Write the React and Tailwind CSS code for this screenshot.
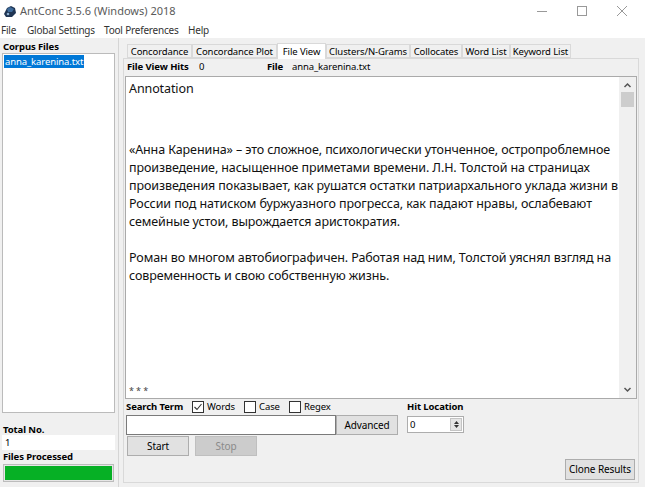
import React from 'react';

const ui = { fontFamily: '"Noto Sans", "Open Sans", sans-serif' };

const tabs = [
  { name: 'Concordance', w: 'w-[65px]' },
  { name: 'Concordance Plot', w: 'w-[85px]' },
  { name: 'File View', w: 'w-[49px]', active: true },
  { name: 'Clusters/N-Grams', w: 'w-[84px]' },
  { name: 'Collocates', w: 'w-[52px]' },
  { name: 'Word List', w: 'w-[48px]' },
  { name: 'Keyword List', w: 'w-[61px]' },
];

const para1 = [
  '«Анна Каренина» – это сложное, психологически утонченное, остропроблемное',
  'произведение, насыщенное приметами времени. Л.Н. Толстой на страницах',
  'произведения показывает, как рушатся остатки патриархального уклада жизни в',
  'России под натиском буржуазного прогресса, как падают нравы, ослабевают',
  'семейные устои, вырождается аристократия.',
];

const para2 = [
  'Роман во многом автобиографичен. Работая над ним, Толстой уяснял взгляд на',
  'современность и свою собственную жизнь.',
];

const Checkbox = ({ checked, label }) => (
  <label className="flex items-center gap-[3px]">
    <span className="w-[12px] h-[12px] border border-[#333] bg-white flex items-center justify-center">
      {checked && (
        <svg width="10" height="10" viewBox="0 0 10 10">
          <path d="M1.5 5 L4 7.5 L8.5 2" fill="none" stroke="#333" strokeWidth="1.1" />
        </svg>
      )}
    </span>
    <span>{label}</span>
  </label>
);

const AppIcon = () => (
  <svg width="14" height="13" viewBox="0 0 14 13">
    <path d="M1 9 L4 3 L8 1 L12 3 L13 8 L9 12 L3 12 Z" fill="#1f3553" />
    <path d="M4 4 L7 2 L11 4 L9 7 L5 7 Z" fill="#3d6a9a" />
    <circle cx="5" cy="9" r="1.3" fill="#8fb0d0" />
  </svg>
);

const Button = ({ children, className = '' }) => (
  <div className={`h-[20px] border border-[#adadad] bg-[#e1e1e1] flex items-center justify-center ${className}`}>{children}</div>
);

export default function App() {
  return (
    <div className="w-[645px] h-[487px] bg-[#f0f0f0] flex flex-col overflow-hidden text-[9.5px] tracking-[-0.1px] text-black whitespace-nowrap" style={ui}>
      {/* title bar */}
      <div className="h-[22px] bg-white flex items-center shrink-0">
        <div className="pl-[3px] pr-[3px] flex items-center"><AppIcon /></div>
        <span className="text-[11px] tracking-normal text-[#5a5a5a]">AntConc 3.5.6 (Windows) 2018</span>
        <div className="ml-auto flex items-center h-full pr-[3px]">
          <div className="w-[40px] flex justify-center">
            <svg width="10" height="10" viewBox="0 0 10 10"><path d="M0 5.5 H10" stroke="#999" strokeWidth="1" /></svg>
          </div>
          <div className="w-[40px] flex justify-center">
            <svg width="10" height="10" viewBox="0 0 10 10"><rect x="0.5" y="0.5" width="9" height="9" fill="none" stroke="#999" /></svg>
          </div>
          <div className="w-[40px] flex justify-center">
            <svg width="10" height="10" viewBox="0 0 10 10"><path d="M0 0 L10 10 M10 0 L0 10" stroke="#999" strokeWidth="1" /></svg>
          </div>
        </div>
      </div>

      {/* menu bar */}
      <div className="h-[16px] bg-white flex items-center pl-[1px] shrink-0 text-[#333] text-[10px] tracking-[-0.2px]">
        <span className="w-[26px]">File</span>
        <span className="w-[77px]">Global Settings</span>
        <span className="w-[84px]">Tool Preferences</span>
        <span>Help</span>
      </div>

      {/* body */}
      <div className="flex-1 flex min-h-0">
        {/* left panel */}
        <div className="w-[119px] flex flex-col pl-[2px] pr-[3px] pb-[5px] border-r border-[#d5d5d5]">
          <div className="h-[15px] font-bold leading-[15px] pl-[1px] pt-[1px]">Corpus Files</div>
          <div className="flex-1 bg-white border border-[#bbb] pt-[1px] pl-[1px]">
            <span className="bg-[#0078d7] text-white px-[1px] leading-[13px] inline-block">anna_karenina.txt</span>
          </div>
          <div className="h-[22px] font-bold flex items-end pl-[1px] leading-[10px]">Total No.</div>
          <div className="h-[15px] bg-white pl-[3px] leading-[15px] text-black">1</div>
          <div className="h-[13px] font-bold pl-[1px] leading-[14px]">Files Processed</div>
          <div className="mt-[1px] h-[18px] mx-[1px] border border-[#bcbcbc] bg-[#e6e6e6] p-[1px]">
            <div className="h-full bg-[#06b025]" />
          </div>
        </div>

        {/* right panel */}
        <div className="flex-1 flex flex-col pl-[4px] pr-[6px] pb-[4px] pt-[6px]">
          <div className="flex pl-[4px] h-[14px] items-end">
            {tabs.map((t) => (
              <div
                key={t.name}
                className={
                  t.active
                    ? `${t.w} h-[16px] -mb-[1px] bg-white border border-b-0 border-[#d9d9d9] text-center leading-[15px] relative z-10`
                    : `${t.w} h-[14px] bg-[#f0f0f0] border border-[#d9d9d9] text-center leading-[13px]`
                }
              >
                {t.name}
              </div>
            ))}
          </div>
          <div className="flex-1 border border-[#d9d9d9] flex flex-col min-h-0 px-[1px]">
            <div className="h-[17px] flex items-center pl-[2px]">
              <span className="font-bold w-[72px]">File View Hits</span>
              <span className="w-[68px]">0</span>
              <span className="font-bold w-[25px]">File</span>
              <span>anna_karenina.txt</span>
            </div>
            {/* text area */}
            <div className="h-[323px] bg-white border border-[#aaa] flex min-h-0">
              <div className="flex-1 pl-[3px] pt-[3px] text-[12.5px] tracking-[-0.1px] leading-[18px] text-[#111] flex flex-col">
                <p>Annotation</p>
                <p className="mt-[43px]">
                  {para1.map((l) => (<span key={l} className="block">{l}</span>))}
                </p>
                <p className="mt-[18px]">
                  {para2.map((l) => (<span key={l} className="block">{l}</span>))}
                </p>
                <p className="mt-auto text-[9px] leading-[12px] pb-[1px] text-[#444]">* * *</p>
              </div>
              <div className="w-[17px] bg-[#f0f0f0] flex flex-col items-center">
                <svg width="9" height="9" viewBox="0 0 9 9" className="mt-[4px]">
                  <path d="M1.5 6 L4.5 3 L7.5 6" fill="none" stroke="#555" strokeWidth="1.5" />
                </svg>
                <div className="w-[13px] h-[15px] bg-[#cdcdcd] mt-[2px]" />
                <svg width="9" height="9" viewBox="0 0 9 9" className="mt-auto mb-[4px]">
                  <path d="M1.5 3 L4.5 6 L7.5 3" fill="none" stroke="#555" strokeWidth="1.5" />
                </svg>
              </div>
            </div>

            {/* search controls */}
            <div className="flex pl-[1px]">
              <div className="w-[281px] flex flex-col">
                <div className="h-[16px] flex items-center">
                  <span className="font-bold w-[66px]">Search Term</span>
                  <div className="flex items-center gap-[9px]">
                    <Checkbox checked label="Words" />
                    <Checkbox label="Case" />
                    <Checkbox label="Regex" />
                  </div>
                </div>
                <div className="flex">
                  <div className="w-[210px] h-[20px] bg-white border border-[#7a7a7a]" />
                  <Button className="w-[62px] text-[10px]">Advanced</Button>
                </div>
                <div className="flex gap-[6px] mt-[1px] pl-[1px]">
                  <Button className="w-[62px] text-[10px]">Start</Button>
                  <div className="w-[62px] h-[20px] border border-[#bfbfbf] bg-[#cccccc] text-[#8a8a8a] text-[10px] flex items-center justify-center">Stop</div>
                </div>
              </div>
              <div className="flex flex-col">
                <div className="h-[16px] font-bold flex items-center">Hit Location</div>
                <div className="mt-[1px] w-[57px] h-[17px] bg-white border border-[#adadad] flex items-center">
                  <span className="pl-[2px] flex-1 leading-[15px]">0</span>
                  <div className="w-[12px] h-[13px] mr-[1px] bg-[#e5e5e5] border border-[#c4c4c4] flex flex-col items-center justify-center gap-[1px]">
                    <svg width="5" height="3" viewBox="0 0 5 3"><path d="M0 3 L2.5 0 L5 3 Z" fill="#333" /></svg>
                    <svg width="5" height="3" viewBox="0 0 5 3"><path d="M0 0 L2.5 3 L5 0 Z" fill="#333" /></svg>
                  </div>
                </div>
              </div>
            </div>
            <div className="flex-1 flex items-end justify-end pr-[2px] pb-[2px]">
              <Button className="h-[21px] px-[3px] text-[10px]">Clone Results</Button>
            </div>
          </div>
        </div>
      </div>
    </div>
  );
}
